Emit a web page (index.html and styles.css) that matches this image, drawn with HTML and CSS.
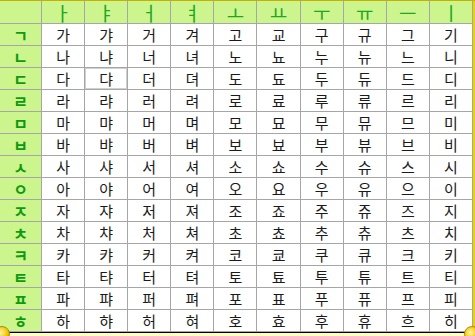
FILE: index.html
```html
<!DOCTYPE html>
<html lang="ko">
<head>
  <meta charset="UTF-8">
  <title>한글 자모표</title>
  <link rel="stylesheet" href="styles.css">
</head>
<body>
  <div class="sheet">
    <div class="chart" id="chart"></div>
    <div class="status-bar">
      <span class="knob knob-left"></span>
      <span class="knob knob-right"></span>
    </div>
  </div>

  <script>
    // build the syllable table from jamo
    const vowels = ['ㅏ','ㅑ','ㅓ','ㅕ','ㅗ','ㅛ','ㅜ','ㅠ','ㅡ','ㅣ'];
    const vowelIdx = [0, 2, 4, 6, 8, 12, 13, 17, 18, 20];
    const consonants = ['ㄱ','ㄴ','ㄷ','ㄹ','ㅁ','ㅂ','ㅅ','ㅇ','ㅈ','ㅊ','ㅋ','ㅌ','ㅍ','ㅎ'];
    const leadIdx = [0, 2, 3, 5, 6, 7, 9, 11, 12, 14, 15, 16, 17, 18];
    const chart = document.getElementById('chart');

    let corner = document.createElement('div');
    corner.className = 'cell head';
    chart.appendChild(corner);
    vowels.forEach(function (v) {
      let c = document.createElement('div');
      c.className = 'cell head vowel';
      c.textContent = v;
      chart.appendChild(c);
    });

    consonants.forEach(function (k, r) {
      let h = document.createElement('div');
      h.className = 'cell head consonant';
      h.textContent = k;
      chart.appendChild(h);
      vowelIdx.forEach(function (vi, col) {
        let c = document.createElement('div');
        c.className = 'cell';
        if (r === 2 && col === 1) c.className += ' selected';
        c.textContent = String.fromCharCode(0xAC00 + (leadIdx[r] * 21 + vi) * 28);
        chart.appendChild(c);
      });
    });
  </script>
</body>
</html>
```

FILE: styles.css
```css
/* sheet */
body {
  margin: 0;
  background: #ffffff;
  overflow: hidden;
}

.sheet {
  position: relative;
  width: 475px;
  height: 336px;
  border-top: 1px solid #c8b000;
  box-sizing: border-box;
}

.chart {
  display: grid;
  grid-template-columns: 42px repeat(10, 1fr);
  grid-template-rows: 23px repeat(14, 22px);
  width: 473px;
  border-right: 2px solid #e6d400;
  font-family: "Noto Sans CJK KR", "DejaVu Sans", sans-serif;
}

.cell {
  display: flex;
  align-items: center;
  justify-content: center;
  border-right: 1px solid #a6a6a6;
  border-bottom: 1px solid #a6a6a6;
  box-sizing: border-box;
  font-size: 15px;
  color: #1a1a1a;
  line-height: 1;
}

.head {
  background-color: #ccf58e;
  color: #1ea81e;
}

.vowel {
  font-size: 19px;
}

.consonant {
  font-weight: bold;
  font-size: 16px;
  color: #0f9a0f;
}

.selected {
  box-shadow: inset 1px 1px 0 #d0d0d0, inset -1px -1px 0 #d0d0d0;
}

/* bottom bar */
.status-bar {
  height: 3px;
  border-top: 1px solid #000000;
  background-color: #ffffc4;
}

.knob {
  position: absolute;
  bottom: -6px;
  width: 14px;
  height: 14px;
  border-radius: 50%;
  background: radial-gradient(circle at 40% 40%, #fff6a0, #f0c000 60%, #c89000);
  border: 1px solid #b08800;
}

.knob-left {
  left: -6px;
}

.knob-right {
  right: -5px;
}
```
